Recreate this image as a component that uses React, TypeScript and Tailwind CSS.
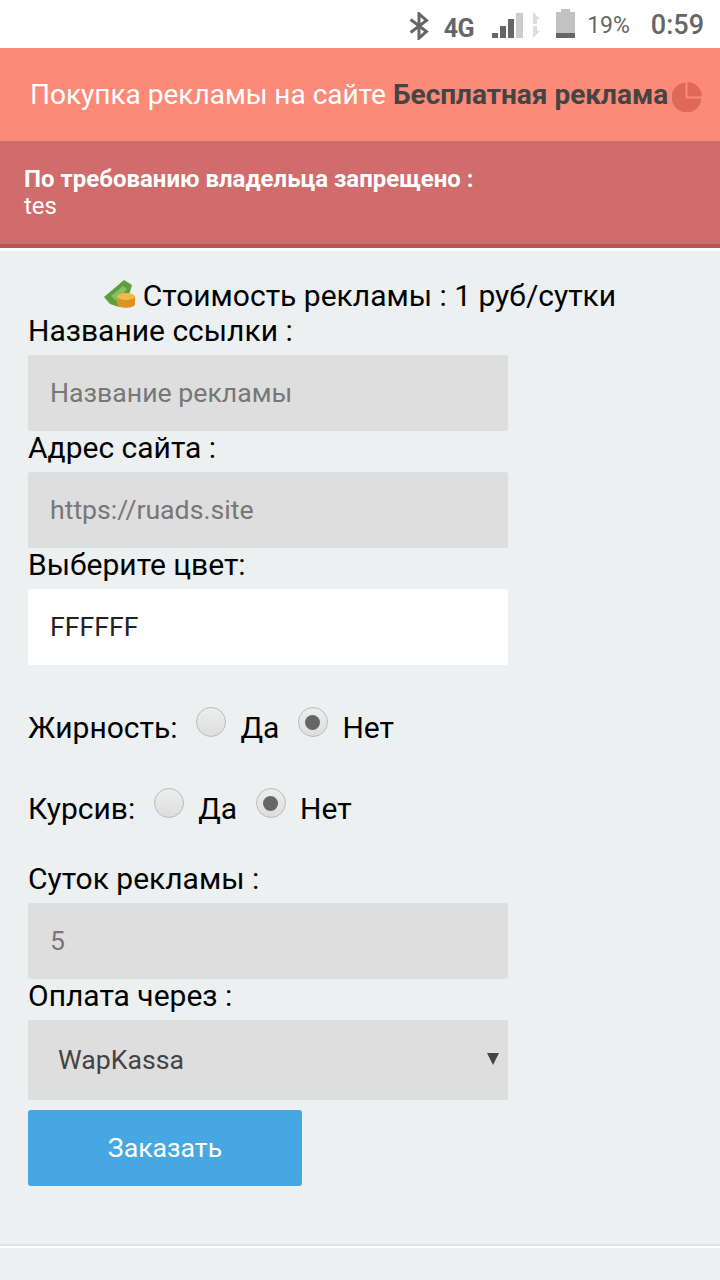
import React from "react";

function StatusBar() {
  return (
    <div className="h-12 bg-white flex items-center justify-end text-[#666] pr-[16px]">
      {/* bluetooth */}
      <svg width="20" height="28" viewBox="0 0 20 30" className="mr-[15px] mt-[3px]">
        <path d="M1 8 L18 21 L10 28 L10 2 L18 9 L1 22" fill="none" stroke="#666" strokeWidth="3.2" />
      </svg>
      <span className="text-[25px] font-bold mr-[18px] mt-[10px] tracking-[-0.5px]">4G</span>
      {/* signal */}
      <div className="flex items-end gap-[2px] h-[26px] mt-[2px]">
        <div className="w-[6px] h-[5px] bg-[#666]" />
        <div className="w-[6px] h-[12px] bg-[#666]" />
        <div className="w-[6px] h-[19px] bg-[#666]" />
        <div className="w-[7px] h-[25px] bg-[#ccc]" />
      </div>
      <svg width="12" height="26" viewBox="0 0 12 26" className="ml-[8px] mr-[13px] mt-[2px]">
        <path d="M2 0 L9 7 H6 V12 H2 Z M2 14 H6 V19 H9 L2 26 Z" fill="#ddd" />
      </svg>
      {/* battery */}
      <div className="w-[19px] h-[29px] mr-[12px] mb-[1px] flex flex-col items-center">
        <div className="w-[9px] h-[3px] bg-[#c2c2c2]" />
        <div className="w-[19px] flex-1 bg-[#c2c2c2] flex flex-col justify-end">
          <div className="h-[5px] bg-[#666]" />
        </div>
      </div>
      <span className="text-[23px] mr-[21px] mt-[5px]">19%</span>
      <span className="text-[27px] font-medium mt-[3px]">0:59</span>
    </div>
  );
}

function Label({ children }: { children: React.ReactNode }) {
  return <div className="text-[30px] leading-[34px] text-black">{children}</div>;
}

function Field({ value, white }: { value: string; white?: boolean }) {
  return (
    <div
      className={
        "w-[480px] h-[76px] rounded-[3px] px-[22px] flex items-center text-[26.67px] mt-[7px] " +
        (white ? "bg-white text-[#222]" : "bg-[#dfdede] text-[#777]")
      }
    >
      {value}
    </div>
  );
}

function Radio({ checked }: { checked?: boolean }) {
  return (
    <span className="w-[30px] h-[30px] rounded-full border border-[#bbb] bg-gradient-to-b from-[#eee] to-[#ddd] flex items-center justify-center mt-[-10px]">
      {checked && <span className="w-[15px] h-[15px] rounded-full bg-[#666]" />}
    </span>
  );
}

function RadioRow({ label }: { label: string }) {
  return (
    <div className="flex items-center text-[30px] text-black h-[34px]">
      <span>{label}</span>
      <span className="ml-[18.5px]"><Radio /></span>
      <span className="ml-[14.5px]">Да</span>
      <span className="ml-[18.5px]"><Radio checked /></span>
      <span className="ml-[14.5px]">Нет</span>
    </div>
  );
}

function MoneyIcon() {
  return (
    <svg width="32" height="32" viewBox="0 0 32 32" className="mr-[7px] mt-[-1px] blur-[0.5px]">
      <path d="M0 19 L20 2 L28 7 L26 14 L15 29 L6 26 Z" fill="#5f9e3a" />
      <path d="M7 18 L19 8 L23 11 L13 23 Z" fill="#86c060" />
      <path d="M13 19 V26 C13 31 31 31 31 26 V18 C31 22 13 23 13 19 Z" fill="#dd9226" />
      <ellipse cx="22" cy="18.5" rx="9" ry="3.5" fill="#f2b84a" />
    </svg>
  );
}

export default function App() {
  return (
    <div className="w-[720px] h-[1280px] overflow-hidden bg-[#ecf0f1] font-['Roboto',sans-serif]">
      <StatusBar />

      <div className="h-[93px] bg-[#fb8a78] flex items-center pl-[30px] text-[28px] whitespace-nowrap text-white">
        <span>Покупка рекламы на сайте</span>
        <span className="ml-[7px] font-bold text-[#444]">Бесплатная реклама</span>
        <svg width="30" height="30" viewBox="0 0 30 30" className="ml-[4px] mt-[4px]">
          <path d="M13.5 0.5 V16.5 H29.5 A15 15 0 1 1 13.5 0.5 Z" fill="#e0685a" />
          <path d="M15.5 0 A15 15 0 0 1 30 14.5 H15.5 Z" fill="#e0685a" />
        </svg>
      </div>

      <div className="h-[107px] bg-[#d06c6c] border-b-[4px] border-[#b85555] px-[24px] pt-[25px] text-[24px] leading-[27px] text-white">
        <div className="font-bold">По требованию владельца запрещено :</div>
        <div>tes</div>
      </div>
      <div className="h-[3px] bg-white" />

      <div className="pl-[28px] pt-[28px]">
        <div className="flex items-start justify-center h-[35px] text-[30px] leading-[34px] text-black ml-[-28px]">
          <MoneyIcon />
          <span>Стоимость рекламы : 1 руб/сутки</span>
        </div>
        <Label>Название ссылки :</Label>
        <Field value="Название рекламы" />
        <Label>Адрес сайта :</Label>
        <Field value="https://ruads.site" />
        <Label>Выберите цвет:</Label>
        <Field value="FFFFFF" white />

        <div className="mt-[45px]">
          <RadioRow label="Жирность:" />
        </div>
        <div className="mt-[47px]">
          <RadioRow label="Курсив:" />
        </div>

        <div className="mt-[37px]">
          <Label>Суток рекламы :</Label>
        </div>
        <Field value="5" />
        <Label>Оплата через :</Label>
        <div className="w-[480px] h-[80px] mt-[7px] rounded-[3px] bg-[#dfdede] pl-[30px] pr-[9px] flex items-center justify-between text-[26.67px] text-[#444]">
          <span>WapKassa</span>
          <span className="w-0 h-0 border-x-[6px] border-x-transparent border-t-[12px] border-t-[#444] mb-[3px]" />
        </div>
        <div className="w-[274px] h-[76px] mt-[10px] rounded-[3px] bg-[#46a7e2] text-white text-[26.67px] flex items-center justify-center">
          Заказать
        </div>
      </div>

      <div className="mt-[58px] h-[2px] bg-[#dfe4e5]" />
      <div className="h-[2px] bg-white" />
    </div>
  );
}
